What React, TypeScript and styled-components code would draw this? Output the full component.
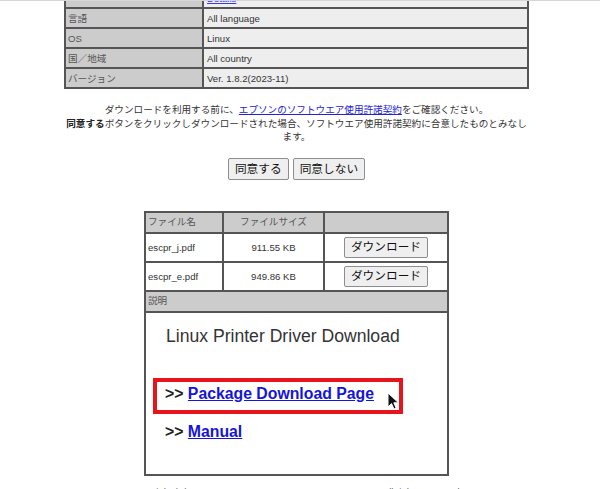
import React from "react";
import styled, { createGlobalStyle } from "styled-components";

const GlobalStyle = createGlobalStyle`
    body {
        margin: 0;
        background: #fff;
        font-family: "Liberation Sans", "Noto Sans CJK JP", sans-serif;
        color: #333;
    }
`;

const infoRows = [
    { label: "言語", value: "All language" },
    { label: "OS", value: "Linux" },
    { label: "国／地域", value: "All country" },
    { label: "バージョン", value: "Ver. 1.8.2(2023-11)" },
];

const files = [
    { name: "escpr_j.pdf", size: "911.55 KB" },
    { name: "escpr_e.pdf", size: "949.86 KB" },
];

export default function App() {
    return (
        <>
            <GlobalStyle />
            <TopEdge />
            <Page>
                <InfoTable>
                    <colgroup>
                        <col style={{ width: 138 }} />
                        <col />
                    </colgroup>
                    <tbody>
                        <tr>
                            <LabelCell />
                            <ValueCell>
                                <SmallLink href="#">Details</SmallLink>
                            </ValueCell>
                        </tr>
                        {infoRows.map((row) => (
                            <tr key={row.label}>
                                <LabelCell>{row.label}</LabelCell>
                                <ValueCell>{row.value}</ValueCell>
                            </tr>
                        ))}
                    </tbody>
                </InfoTable>

                <Notice>
                    ダウンロードを利用する前に、<TextLink href="#">エプソンのソフトウエア使用許諾契約</TextLink>をご確認ください。
                    <br />
                    <strong>同意する</strong>ボタンをクリックしダウンロードされた場合、ソフトウエア使用許諾契約に合意したものとみなします。
                </Notice>

                <ButtonRow>
                    <PlainButton>同意する</PlainButton>
                    <PlainButton>同意しない</PlainButton>
                </ButtonRow>

                <FileTable>
                    <colgroup>
                        <col style={{ width: 78 }} />
                        <col style={{ width: 101 }} />
                        <col style={{ width: 124 }} />
                    </colgroup>
                    <tbody>
                        <tr>
                            <HeadCell>ファイル名</HeadCell>
                            <HeadCell $align="center">ファイルサイズ</HeadCell>
                            <HeadCell />
                        </tr>
                        {files.map((file) => (
                            <tr key={file.name}>
                                <DataCell>{file.name}</DataCell>
                                <DataCell $align="center">{file.size}</DataCell>
                                <DataCell $align="center">
                                    <PlainButton $tall={21}>ダウンロード</PlainButton>
                                </DataCell>
                            </tr>
                        ))}
                        <tr>
                            <HeadCell colSpan={3}>説明</HeadCell>
                        </tr>
                        <tr>
                            <ContentCell colSpan={3}>
                                <DriverTitle>Linux Printer Driver Download</DriverTitle>
                                <Highlight>
                                    <LinkLine>
                                        <Chevrons>&gt;&gt;</Chevrons> <BigLink href="#">Package Download Page</BigLink>
                                    </LinkLine>
                                    <Cursor viewBox="0 0 12 18" width="12" height="18">
                                        <path
                                            d="M1 1 L1 15 L4.5 11.6 L7 17 L9.2 16 L6.8 10.8 L11.5 10.8 Z"
                                            fill="#111"
                                            stroke="#fff"
                                            strokeWidth="1"
                                            strokeLinejoin="round"
                                        />
                                    </Cursor>
                                </Highlight>
                                <LinkLine $indent>
                                    <Chevrons>&gt;&gt;</Chevrons> <BigLink href="#">Manual</BigLink>
                                </LinkLine>
                            </ContentCell>
                        </tr>
                    </tbody>
                </FileTable>

                <Footer>Copyright (C) SEIKO EPSON CORPORATION 2007-2019. All rights reserved.</Footer>
            </Page>
        </>
    );
}

const TopEdge = styled.div`
    position: fixed;
    top: 0;
    left: 0;
    right: 0;
    height: 1px;
    background: #d6d6d6;
    z-index: 2;
`;

const Page = styled.div`
    width: 465px;
    margin-left: 64px;
    display: flex;
    flex-direction: column;
    font-size: 9.6px;
`;

const InfoTable = styled.table`
    width: 465px;
    margin-top: -13px;
    border-collapse: collapse;
    table-layout: fixed;
`;

const LabelCell = styled.td`
    background: #ccc;
    color: #555;
    border: 2px solid #555;
    padding: 2.5px 2px;
    line-height: 13px;
    white-space: nowrap;
`;

const ValueCell = styled.td`
    background: #eee;
    color: #333;
    border: 2px solid #555;
    padding: 2.5px 3px;
    line-height: 13px;
`;

const SmallLink = styled.a`
    color: #3a3ae0;
`;

const Notice = styled.p`
    margin: 14px 0 0;
    text-align: center;
    line-height: 13.6px;
    color: #333;

    strong {
        color: #222;
    }
`;

const TextLink = styled.a`
    color: #2323d6;
`;

const ButtonRow = styled.div`
    display: flex;
    justify-content: center;
    gap: 4px;
    margin-top: 14px;
`;

const PlainButton = styled.button<{ $tall?: number }>`
    height: ${(p) => p.$tall ?? 22}px;
    padding: 0 6px;
    font-family: "Liberation Sans", "Noto Sans CJK JP", sans-serif;
    font-size: 11.7px;
    color: #111;
    background: #efefef;
    border: 1px solid #8d8d8d;
    border-radius: 2px;
    line-height: 1;
`;

const FileTable = styled.table`
    width: 303px;
    margin: 31px auto 0;
    border-collapse: collapse;
    table-layout: fixed;
`;

const HeadCell = styled.td<{ $align?: string }>`
    background: #ccc;
    color: #555;
    border: 2px solid #555;
    padding: 2.5px 2px;
    line-height: 14px;
    text-align: ${(p) => p.$align ?? "left"};
`;

const DataCell = styled.td<{ $align?: string }>`
    background: #fff;
    color: #333;
    border: 2px solid #555;
    padding: 3px 2px;
    height: 21px;
    text-align: ${(p) => p.$align ?? "left"};
`;

const ContentCell = styled.td`
    background: #fff;
    border: 2px solid #555;
    padding: 0;
    height: 161px;
    vertical-align: top;
`;

const DriverTitle = styled.div`
    margin: 13px 0 0 20px;
    font-size: 17.6px;
    line-height: 20px;
    color: #333;
`;

const Highlight = styled.div`
    position: relative;
    width: 250px;
    box-sizing: border-box;
    margin: 32px 0 0 7px;
    padding: 2px 0 6px 8px;
    border: 4px solid #e8141c;
`;

const LinkLine = styled.div<{ $indent?: boolean }>`
    font-size: 15.8px;
    font-weight: bold;
    line-height: 20px;
    white-space: nowrap;
    ${(p) => (p.$indent ? "margin: 8px 0 0 19px;" : "")}
`;

const Chevrons = styled.span`
    color: #222;
`;

const BigLink = styled.a`
    color: #1414dc;
`;

const Cursor = styled.svg`
    position: absolute;
    left: 230px;
    top: 10px;
`;

const Footer = styled.div`
    margin-top: 10px;
    text-align: center;
    color: #666;
    white-space: nowrap;
`;
